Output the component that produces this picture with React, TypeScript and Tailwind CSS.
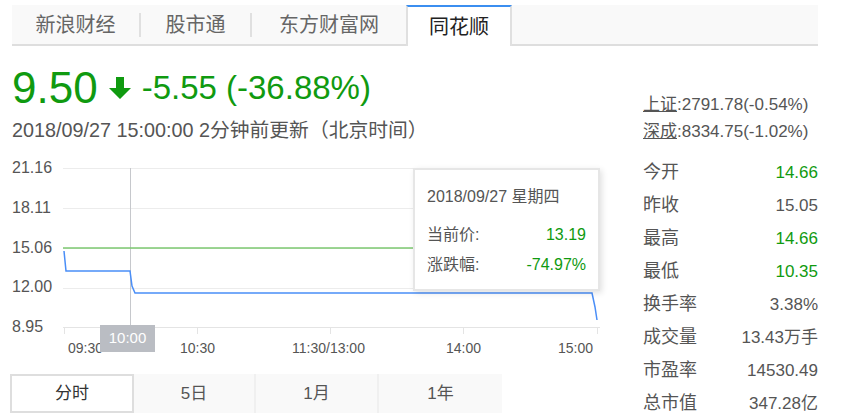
import { FunctionComponent } from 'react'

const green = 'text-[#109a10]'

const topTabs = ['新浪财经', '股市通', '东方财富网']

const stats: { label: string; value: string; up?: boolean }[] = [
  { label: '今开', value: '14.66', up: true },
  { label: '昨收', value: '15.05' },
  { label: '最高', value: '14.66', up: true },
  { label: '最低', value: '10.35', up: true },
  { label: '换手率', value: '3.38%' },
  { label: '成交量', value: '13.43万手' },
  { label: '市盈率', value: '14530.49' },
  { label: '总市值', value: '347.28亿' },
]

const ArrowDown: FunctionComponent = () => (
  <svg width="24" height="24" viewBox="0 0 24 24" className="mx-[10px]">
    <path d="M8 1h8v11h7L12 23 1 12h7z" fill="#109a10" />
  </svg>
)

const Chart: FunctionComponent = () => {
  const yLabels = ['21.16', '18.11', '15.06', '12.00', '8.95']
  return (
    <div className="relative mt-[10px] h-[206px] w-[620px]">
      <div className="absolute left-3 top-[6px] flex h-[179px] flex-col justify-between text-[16px] leading-[20px] text-[#555]">
        {yLabels.map(l => (
          <span key={l}>{l}</span>
        ))}
      </div>
      <svg
        width="540"
        height="170"
        className="absolute left-[63px] top-[16px]"
        viewBox="0 0 540 170"
      >
        {[0, 40, 80, 120].map(y => (
          <line key={y} x1="0" x2="537" y1={y + 0.5} y2={y + 0.5} stroke="#ececec" />
        ))}
        <line x1="0" x2="537" y1="159.5" y2="159.5" stroke="#e4e4e4" />
        {[1, 134, 267, 400, 534].map(x => (
          <line key={x} x1={x + 0.5} x2={x + 0.5} y1="159" y2="166" stroke="#e4e4e4" />
        ))}
        <line x1="67.5" x2="67.5" y1="0" y2="159" stroke="#c6c8cc" />
        <line x1="0" x2="537" y1="80" y2="80" stroke="#7cc870" strokeWidth="1.5" />
        <polyline
          points="1,83 3,103 67,103 69,118 72,125 529,125 532,139 534,152"
          fill="none"
          stroke="#4a8ef7"
          strokeWidth="1.5"
        />
      </svg>
      <div className="absolute left-[68px] top-[187px] text-[14px] leading-[18px] text-[#555]">
        09:30
      </div>
      <div className="absolute left-[180px] top-[187px] text-[14px] leading-[18px] text-[#555]">
        10:30
      </div>
      <div className="absolute left-[292px] top-[187px] text-[14px] leading-[18px] text-[#555]">
        11:30/13:00
      </div>
      <div className="absolute left-[446px] top-[187px] text-[14px] leading-[18px] text-[#555]">
        14:00
      </div>
      <div className="absolute left-[558px] top-[187px] text-[14px] leading-[18px] text-[#555]">
        15:00
      </div>
      <div className="absolute left-[100px] top-[173px] flex h-[27px] w-[55px] items-center justify-center bg-[#babdc3] text-[15px] text-white">
        10:00
      </div>
      <div className="absolute left-[413px] top-[16px] h-[123px] w-[187px] border-2 border-[#e6e6e6] bg-white px-[12px] pt-[17px] text-[16px] leading-[20px] text-[#555] shadow-[2px_2px_6px_rgba(0,0,0,0.12)]">
        <div>2018/09/27 星期四</div>
        <div className="mt-[18px] flex justify-between">
          <span>当前价:</span>
          <span className={green}>13.19</span>
        </div>
        <div className="mt-[10px] flex justify-between">
          <span>涨跌幅:</span>
          <span className={green}>-74.97%</span>
        </div>
      </div>
    </div>
  )
}

export default function App() {
  return (
    <div
      className="relative h-[420px] w-[844px] overflow-hidden bg-white"
      style={{ fontFamily: '"Liberation Sans", "Noto Sans CJK SC", sans-serif' }}
    >
      <div className="pl-3 pt-[5px]">
        <div className="flex h-[41px] w-[806px] items-stretch border-b-2 border-[#dedede] bg-[#f9f9f9] text-[20px]">
          {topTabs.map((t, i) => (
            <div
              key={t}
              className={
                'flex items-center justify-center text-[#666] ' +
                (i === 0 ? 'w-[129px]' : i === 1 ? 'w-[111px]' : 'w-[154px]')
              }
            >
              <span
                className={
                  'flex h-[24px] w-full items-center justify-center leading-none ' +
                  (i < 2 ? 'border-r-2 border-[#e0e0e0]' : '')
                }
              >
                {t}
              </span>
            </div>
          ))}
          <div className="-mb-[2px] flex w-[106px] items-center justify-center border-x-2 border-t-2 border-x-[#e0e0e0] border-t-[#3b8ef0] bg-white text-[#222]">
            同花顺
          </div>
        </div>
      </div>

      <div className="flex">
        <div className="w-[620px]">
          <div className="ml-3 mt-[20px] flex items-center">
            <span className={'text-[44px] leading-[44px] ' + green}>9.50</span>
            <ArrowDown />
            <span className={'text-[33px] leading-[32px] ' + green}>-5.55 (-36.88%)</span>
          </div>
          <div className="ml-3 mt-[8px] text-[19.8px] leading-[24px] text-[#555]">
            2018/09/27 15:00:00 2分钟前更新（北京时间）
          </div>
          <Chart />
          <div className="ml-[10px] mt-[16px] flex h-[39px] w-[492px] bg-[#f9f9f9] text-[17px] text-[#333]">
            <div className="flex w-[124px] items-center justify-center border-2 border-[#dedede] bg-white">
              分时
            </div>
            <div className="flex w-[122px] items-center justify-center border-r-2 border-[#f0f0f0] text-[#555]">
              5日
            </div>
            <div className="flex w-[123px] items-center justify-center border-r-2 border-[#f0f0f0] text-[#555]">
              1月
            </div>
            <div className="flex w-[123px] items-center justify-center text-[#555]">1年</div>
          </div>
          <div className="ml-3 mt-[6px] flex text-[15px] leading-[20px] text-[#333]">
            <span className={green}>+ 大盘走势</span>
            <span className="ml-[400px]">价格区间走势</span>
          </div>
        </div>

        <div className="w-[224px] pl-[23px] pr-[26px] pt-[45px] text-[#555]">
          <div className="text-[17px] leading-[27px]">
            <div>
              <span className="underline">上证</span>:2791.78(-0.54%)
            </div>
            <div>
              <span className="underline">深成</span>:8334.75(-1.02%)
            </div>
          </div>
          <div className="mt-[11px] text-[17px]">
            {stats.map(s => (
              <div key={s.label} className="flex h-[33px] items-center justify-between">
                <span className="text-[18px]">{s.label}</span>
                <span className={s.up ? green : 'text-[#555]'}>{s.value}</span>
              </div>
            ))}
          </div>
        </div>
      </div>
    </div>
  )
}
